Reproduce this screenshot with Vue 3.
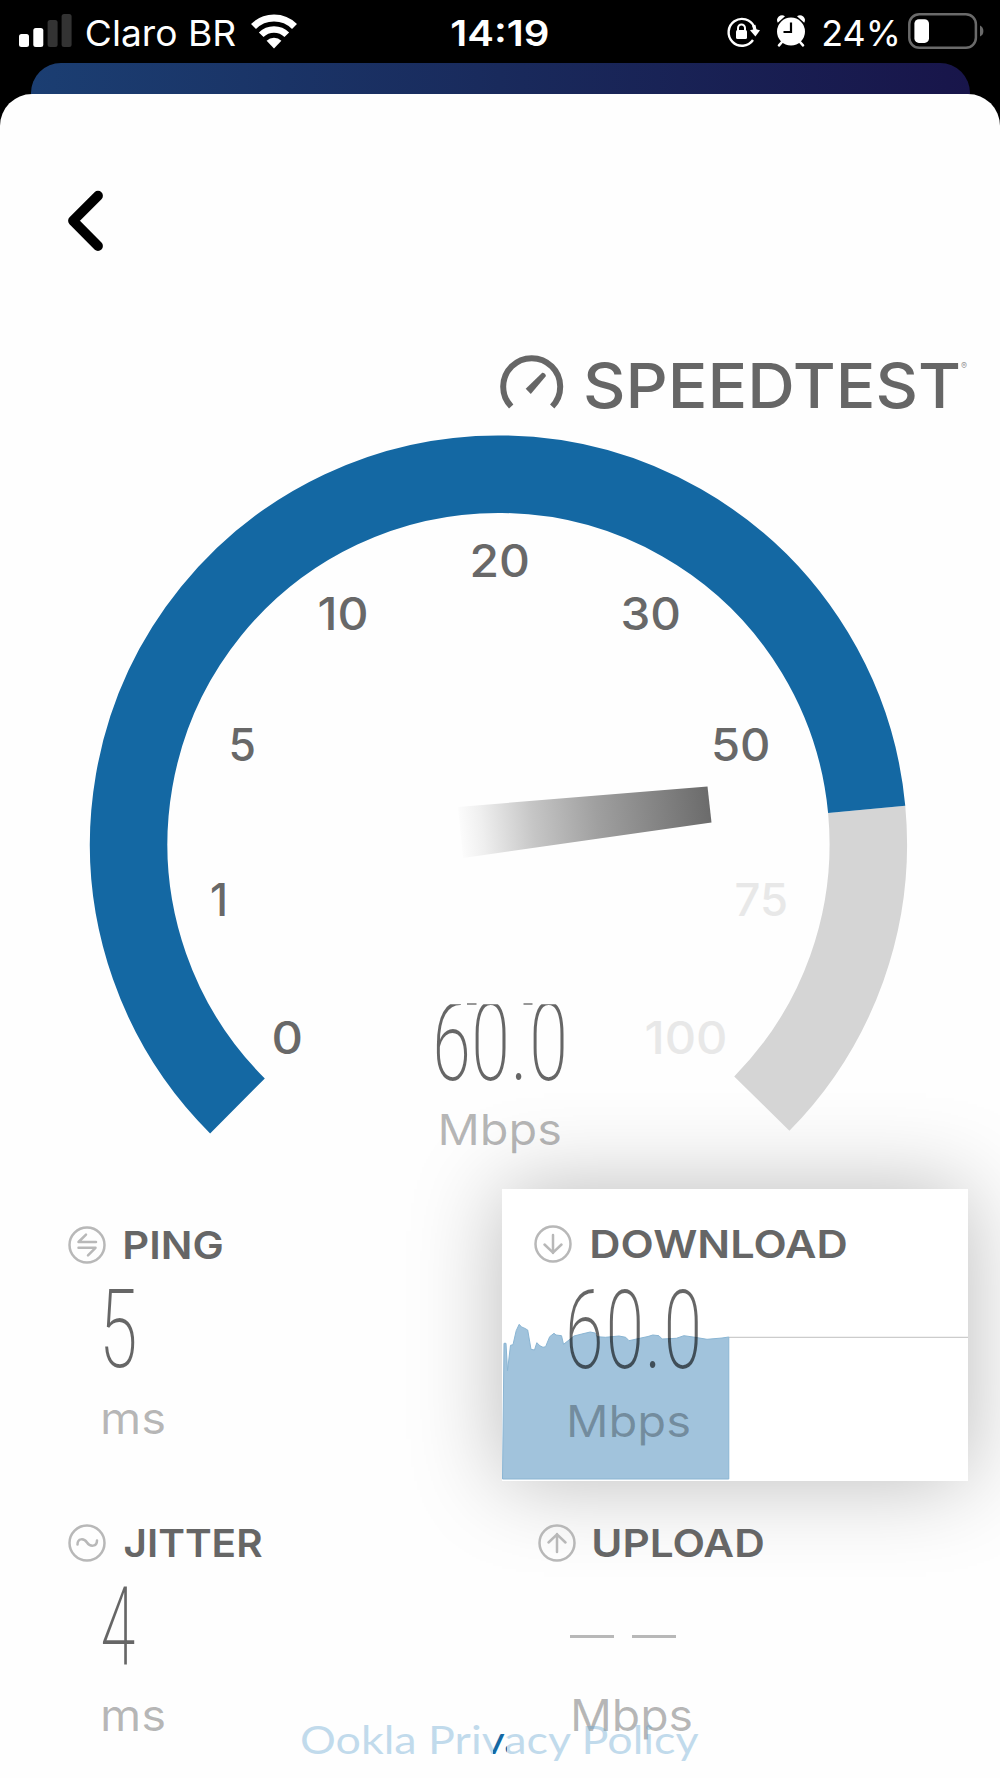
<script setup>
import { h } from 'vue'

// Text whose box is its cap height, set to an exact width.
const FitText = (p) => {
  const size = p.cap / p.ratio
  const b = p.bearing * size
  return h('svg', { width: p.width, height: p.cap, viewBox: `0 0 ${p.width} ${p.cap}`, overflow: 'visible' }, [
    h('text', {
      x: -b, y: p.cap, 'font-size': size, fill: 'currentColor',
      textLength: p.width + 2 * b, lengthAdjust: 'spacingAndGlyphs'
    }, p.text)
  ])
}
FitText.props = {
  text: String,
  width: Number,
  cap: Number,
  ratio: { type: Number, default: 0.727 },
  bearing: { type: Number, default: 0.07 }
}

// Tall condensed figures, each placed by its left edge.
const Figures = (p) => {
  const s = p.stretch
  return h('svg', { width: p.width, height: 78, viewBox: `0 0 ${p.width} 78`, overflow: 'visible' }, [
    h('text', {
      x: p.xs.map(v => (v / s - 6).toFixed(1)).join(' '), y: 78, 'font-size': 109,
      transform: `scale(${s} 1)`, fill: 'currentColor'
    }, p.text)
  ])
}
Figures.props = { text: String, width: Number, xs: Array, stretch: { type: Number, default: 0.75 } }

const ticks = [
  { t: '0', x: 274, w: 26.5, y: 1053.5 },
  { t: '1', x: 212.5, w: 13, y: 916 },
  { t: '5', x: 231, w: 22.5, y: 761 },
  { t: '10', x: 320, w: 46, y: 629.5 },
  { t: '20', x: 472, w: 55.5, y: 576.5 },
  { t: '30', x: 623, w: 55.5, y: 629.5 },
  { t: '50', x: 713.5, w: 54.5, y: 761 },
  { t: '75', x: 737, w: 48.5, y: 916, off: true },
  { t: '100', x: 647, w: 78, y: 1053.5, off: true }
]

const cx = 498.5
const cy = 844
const r = 369.8
const pt = (deg) => {
  const a = deg * Math.PI / 180
  return `${(cx + r * Math.cos(a)).toFixed(2)} ${(cy - r * Math.sin(a)).toFixed(2)}`
}
const trackArc = `M${pt(5.37)} A${r} ${r} 0 0 1 ${pt(-44.6)}`
const valueArc = `M${pt(-134.9)} A${r} ${r} 0 1 1 ${pt(5.37)}`

const graph = '0.5,290 2,154.3 4,154.3 5.5,181.7 8.5,156.3 11,155.7 14.2,141.7 17.2,135.3 19.5,138 21.6,138.7 25.7,141 29,160.3 32.5,161 34.8,153.7 38,156.8 41,158.3 43.6,157.7 47.7,147.7 52,144.3 54,146 59.5,146.7 61.5,155.3 67,151 72,147 79.8,145 88.2,143 93,144 95,147.7 103.4,148.3 117,147 123.7,148.3 127,151.7 139,149 146,147.5 150.8,146 156.9,146.7 160.2,150 174.4,149.3 181.9,146.7 193,148.3 205,150.3 220,149 226.8,148 226.8,290'
</script>

<template>
  <div class="screen">
    <header class="status">
      <svg class="signal" width="53" height="34" viewBox="0 0 53 34">
        <rect x="0" y="20" width="10" height="13" rx="2.5" fill="#fff" />
        <rect x="14.3" y="14" width="10" height="19" rx="2.5" fill="#fff" />
        <rect x="28.6" y="6" width="10" height="27" rx="2.5" fill="#333" />
        <rect x="42.6" y="0" width="10" height="33" rx="2.5" fill="#333" />
      </svg>
      <FitText class="carrier" text="Claro BR" :width="147" :cap="26" :bearing="0.06" />
      <svg class="wifi" width="46" height="35" viewBox="0 0 46 35">
        <g fill="none" stroke="#fff">
          <path d="M2.5 12.5 A29 29 0 0 1 43.5 12.5" stroke-width="7" />
          <path d="M10.2 20.8 A18 18 0 0 1 35.8 20.8" stroke-width="6.6" />
        </g>
        <path d="M23 34.4 L15.6 26.8 A10.5 10.5 0 0 1 30.4 26.8 Z" fill="#fff" />
      </svg>
      <FitText class="clock" text="14:19" :width="95.5" :cap="26" :bearing="0.05" />
      <svg class="lock" width="33" height="30" viewBox="0 0 33 30">
        <path d="M26 23 A13.4 13.4 0 1 1 27.2 9.8" fill="none" stroke="#fff" stroke-width="2.4" />
        <path d="M23 13.2 L28 12 L33 13.2 L28.4 19.6 Z" fill="#fff" />
        <path d="M25 8.5 L28.4 7.8 L29.6 13 L26.4 13 Z" fill="#fff" />
        <rect x="9" y="13" width="11" height="9" rx="1.5" fill="#fff" />
        <path d="M11 14 V11 A3.5 3.5 0 0 1 18 11 V14" fill="none" stroke="#fff" stroke-width="2" />
      </svg>
      <svg class="alarm" width="28" height="32" viewBox="0 0 28 32">
        <circle cx="14" cy="16.6" r="14" fill="#fff" />
        <path d="M0.8 7.8 A5 5 0 0 1 8 1.2 Z M27.2 7.8 A5 5 0 0 0 20 1.2 Z" fill="#fff" />
        <path d="M5 27 L2 30.3 M23 27 L26 30.3" stroke="#fff" stroke-width="2.6" stroke-linecap="round" />
        <path d="M14 7.5 V17 H6.5" fill="none" stroke="#000" stroke-width="2.2" />
      </svg>
      <FitText class="percent" text="24%" :width="76" :cap="26" :bearing="0.05" />
      <svg class="battery" width="76" height="36" viewBox="0 0 76 36">
        <rect x="1.3" y="1.3" width="66.6" height="33.4" rx="10" fill="none" stroke="#6a6a6a" stroke-width="2.5" />
        <rect x="6.4" y="6.3" width="14.6" height="23.6" rx="4.5" fill="#fff" />
        <path d="M72 12.5 Q75.4 14 75.4 18 Q75.4 22 72 23.5 Z" fill="#6a6a6a" />
      </svg>
    </header>
    <div class="backdrop"></div>

    <main class="sheet">
      <svg class="back" width="36" height="62" viewBox="0 0 36 62">
        <path d="M30 5.7 L5 30.8 L30 56" fill="none" stroke="#000" stroke-width="9.8" stroke-linecap="round" stroke-linejoin="round" />
      </svg>

      <div class="brand">
        <svg width="64" height="56" viewBox="0 0 64 56">
          <path d="M11.2 51.500 A28.5 28.5 0 1 1 52.2 51.500" fill="none" stroke="#666" stroke-width="6" />
          <path d="M25.7 33.8 L42.2 17.8 Q44.8 17.5 46 21.1 L30.8 38.9 Z" fill="#666" />
        </svg>
        <FitText class="wordmark" text="SPEEDTEST" :width="372" :cap="45" :bearing="0.05" />
        <span class="reg">®</span>
      </div>

      <svg class="gauge" width="1000" height="730" viewBox="0 430 1000 730">
        <defs>
          <linearGradient id="needle" gradientUnits="userSpaceOnUse" x1="457" y1="833" x2="711" y2="805">
            <stop offset="0" stop-color="#666" stop-opacity="0" />
            <stop offset="0.1" stop-color="#666" stop-opacity="0.1" />
            <stop offset="0.3" stop-color="#666" stop-opacity="0.37" />
            <stop offset="0.55" stop-color="#666" stop-opacity="0.62" />
            <stop offset="1" stop-color="#666" stop-opacity="0.97" />
          </linearGradient>
          <clipPath id="readout"><rect x="420" y="1004.3" width="200" height="90" /></clipPath>
        </defs>
        <path :d="trackArc" fill="none" stroke="#d5d5d5" stroke-width="77.5" />
        <path :d="valueArc" fill="none" stroke="#1468a3" stroke-width="77.5" />
        <path d="M458 806.9 L707.5 786.5 L711.5 822.6 L463 858 Z" fill="url(#needle)" />
        <text
          v-for="k in ticks" :key="k.t" class="tick" :class="{ off: k.off }"
          :x="k.x - 2.5" :y="k.y" :textLength="k.w + 5" lengthAdjust="spacingAndGlyphs"
        >{{ k.t }}</text>
        <g clip-path="url(#readout)">
          <text class="figures" transform="scale(0.75 1)" x="575.6 627.6 680 705" y="1080.5" font-size="109">60.0</text>
        </g>
        <path d="M467 1004 H476.5 M523.5 1004 H532.5" stroke="#777" stroke-width="1.6" />
        <text class="unit-text" x="437.5" y="1145" textLength="124.5" lengthAdjust="spacingAndGlyphs">Mbps</text>
      </svg>

      <section class="metrics">
        <article class="metric">
          <div class="head">
            <svg width="38" height="38" viewBox="0 0 38 38" class="icon">
              <circle cx="19" cy="19" r="17.5" />
              <path d="M28 16 H10.5 L18 8.6 M10.5 21.8 H27.5 L20 29.3" />
            </svg>
            <FitText class="label" text="PING" :width="96" :cap="28" />
          </div>
          <Figures class="figures value" text="5" :width="30" :xs="[0]" />
          <FitText class="unit" text="ms" :width="60" :cap="32" />
        </article>

        <article class="metric card">
          <svg class="graph" width="466" height="292" viewBox="0 0 466 292">
            <path d="M227 148.3 H466" stroke="#ccc" stroke-width="1.3" />
            <polygon :points="graph" fill="#a1c3dc" stroke="#8ab5d3" stroke-width="1" />
          </svg>
          <div class="head">
            <svg width="38" height="38" viewBox="0 0 38 38" class="icon">
              <circle cx="19" cy="19" r="17.5" />
              <path d="M19 10 V28 M10.5 19.5 L19 27.7 L27.5 19.5" />
            </svg>
            <FitText class="label" text="DOWNLOAD" :width="253" :cap="28" />
          </div>
          <Figures class="figures value" text="60.0" :width="128" :xs="[0, 40.5, 79.5, 98.5]" />
          <FitText class="unit" text="Mbps" :width="119" :cap="32" />
        </article>

        <article class="metric">
          <div class="head">
            <svg width="38" height="38" viewBox="0 0 38 38" class="icon">
              <circle cx="19" cy="19" r="17.5" />
              <path d="M9.5 20.5 C9.5 14 16 14 19 18.5 C22 23 29 23 29 16.5" />
            </svg>
            <FitText class="label" text="JITTER" :width="136" :cap="28" :bearing="0.04" />
          </div>
          <Figures class="figures value" text="4" :width="30" :xs="[1]" :stretch="0.68" />
          <FitText class="unit" text="ms" :width="60" :cap="32" />
        </article>

        <article class="metric upload">
          <div class="head">
            <svg width="38" height="38" viewBox="0 0 38 38" class="icon">
              <circle cx="19" cy="19" r="17.5" />
              <path d="M19 28 V10 M10.5 18.5 L19 10.3 L27.5 18.5" />
            </svg>
            <FitText class="label" text="UPLOAD" :width="168" :cap="28" />
          </div>
          <div class="dashes"><i></i><i></i></div>
          <FitText class="unit" text="Mbps" :width="117" :cap="32" />
        </article>
      </section>

      <svg class="privacy" width="400" height="40" viewBox="300 1720 400 40">
        <defs>
          <linearGradient id="shine" gradientUnits="userSpaceOnUse" x1="493" y1="0" x2="507" y2="0">
            <stop offset="0" stop-color="#65a5d0" stop-opacity="0.4" />
            <stop offset="0" stop-color="#1468a3" />
            <stop offset="1" stop-color="#1468a3" />
            <stop offset="1" stop-color="#65a5d0" stop-opacity="0.4" />
          </linearGradient>
        </defs>
        <text x="300" y="1753.5" textLength="398.5" lengthAdjust="spacingAndGlyphs" fill="url(#shine)">Ookla Privacy Policy</text>
      </svg>
    </main>
  </div>
</template>

<style>
body { margin: 0; background: #000; }
</style>

<style scoped>
.screen {
  width: 1000px;
  height: 1778px;
  display: flex;
  flex-direction: column;
  overflow: hidden;
  background: #000;
  font-family: Inter, "Open Sans", sans-serif;
}
.screen svg { display: block; flex: none; overflow: visible; }

.status {
  height: 62.5px;
  display: flex;
  align-items: flex-start;
  color: #fff;
}
.signal { margin: 14px 0 0 19px; }
.carrier { margin: 19.5px 0 0 14.5px; }
.wifi { margin: 14px 0 0 17px; }
.clock { margin: 19.5px 0 0 155px; font-weight: 600; }
.lock { margin: 17px 0 0 180px; }
.alarm { margin: 15px 0 0 16.5px; }
.percent { margin: 19.5px 0 0 18.5px; }
.battery { margin: 12.5px 0 0 9px; }

.backdrop {
  height: 31.5px;
  flex: none;
  margin: 0 30.5px;
  border-radius: 30px 30px 0 0;
  background: linear-gradient(90deg, #1b3e72 0%, #192a5c 50%, #18154a 100%);
}

.sheet {
  flex: 1;
  min-height: 0;
  display: flex;
  flex-direction: column;
  border-radius: 32px 32px 0 0;
  background: #fefefe;
}
.back { margin: 96px 0 0 68px; }

.brand {
  height: 60px;
  display: flex;
  margin: 103px 0 0 500px;
}
.wordmark { margin: 7.5px 0 0 22px; color: #666; font-weight: 550; }
.reg { margin: 5px 0 0 3px; font-size: 9px; line-height: 12px; color: #999; }

.gauge { position: relative; z-index: 1; margin-top: 15px; }
.tick { font-size: 44.5px; font-weight: 500; fill: #686868; }
.tick.off { fill: #e8e8e8; }
.figures {
  font-family: Roboto, sans-serif;
  font-weight: 200;
  font-stretch: 75%;
  color: rgba(0, 0, 0, 0.6);
  fill: rgba(0, 0, 0, 0.6);
}
.unit-text { font-size: 43px; fill: rgba(0, 0, 0, 0.28); }

.metrics {
  display: grid;
  grid-template-columns: 434px 466px;
  grid-template-rows: 292px 260px;
  margin: 29px 0 0 68px;
}
.metric { display: flex; flex-direction: column; }
.head { display: flex; align-items: center; height: 38px; margin-top: 36.5px; gap: 18.5px; }
.icon { fill: none; stroke: #b8b8b8; stroke-width: 2.5; stroke-linecap: round; stroke-linejoin: round; }
.label { color: #666; font-weight: 570; }
.value { margin: 25px 0 0 35px; }
.unit { margin: 35px 0 0 35px; color: rgba(0, 0, 0, 0.28); }
.metric:nth-child(3) .head, .upload .head { margin-top: 43px; }
.metric:nth-child(3) .unit { margin-top: 34px; }

.card {
  position: relative;
  background: #fff;
  box-shadow: 0 0 84px rgba(0, 0, 0, 0.27);
}
.card .head { margin: 36px 0 0 32px; gap: 19.5px; position: relative; }
.card .value { margin: 26.5px 0 0 66.5px; position: relative; }
.card .unit { margin: 37px 0 0 67px; position: relative; }
.graph { position: absolute; inset: 0; }

.upload { position: relative; padding-left: 35.5px; }
.dashes { display: flex; gap: 18px; height: 56px; align-items: flex-end; margin: 24px 0 0 32px; }
.dashes i { width: 44px; height: 3.5px; margin-bottom: 4px; background: #b8b8b8; }
.upload .unit { margin: 57px 0 0 35.5px; }

.privacy { position: relative; z-index: 1; margin: -21px 0 0 300px; font-family: Lato, sans-serif; font-size: 39px; }
</style>
